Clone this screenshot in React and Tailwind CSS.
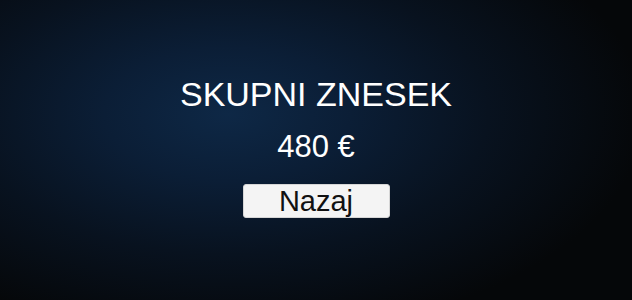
import React from 'react';

const App = () => {
  return (
    <div className="w-full h-[300px] flex flex-col items-center overflow-hidden bg-[radial-gradient(ellipse_75%_85%_at_36%_38%,#0e2846_0%,#0b1e36_26%,#08121f_55%,#050709_88%)] font-['Liberation_Sans',Arial,sans-serif]">
      <h1 className="mt-[77px] text-[34px] leading-[34px] text-white">SKUPNI ZNESEK</h1>
      <div className="mt-[20px] text-[31px] leading-[31px] text-white">480 €</div>
      <button className="mt-[22px] w-[147px] h-[34px] rounded-[3px] bg-[#f4f4f4] border border-[#d6d6d6] text-[29px] leading-[32px] text-[#111]">
        Nazaj
      </button>
    </div>
  );
};

export default App;
